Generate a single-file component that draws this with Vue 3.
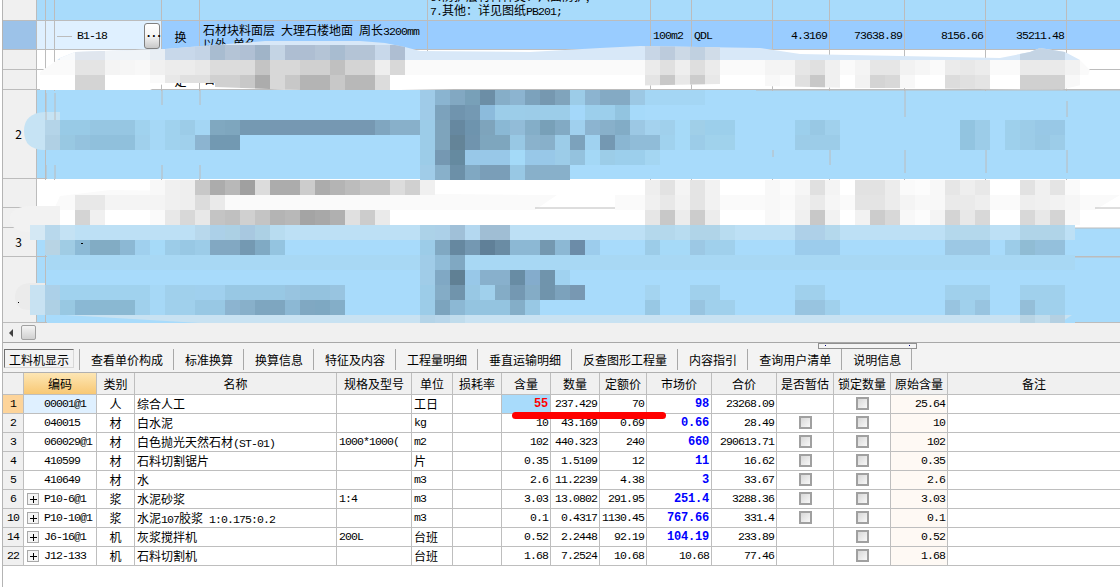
<script setup>
import { computed } from 'vue'

const parts = (text) =>
  text.match(/[\x00-\x7f]+|[^\x00-\x7f]+/g).map((t) => ({ t, lat: t.charCodeAt(0) < 128 }))

const tabs = ['查看单价构成', '标准换算', '换算信息', '特征及内容', '工程量明细', '垂直运输明细', '反查图形工程量', '内容指引', '查询用户清单', '说明信息']
const headers = ['', '编码', '类别', '名称', '规格及型号', '单位', '损耗率', '含量', '数量', '定额价', '市场价', '合价', '是否暂估', '锁定数量', '原始含量', '备注']

// no, code, tree, type, name, spec, unit, qty, amount, quota, market, total, est, lock, orig
const rows = [
  ['1', '00001@1', false, '人', '综合人工', '', '工日', '55', '237.429', '70', '98', '23268.09', false, true, '25.64'],
  ['2', '040015', false, '材', '白水泥', '', 'kg', '10', '43.169', '0.69', '0.66', '28.49', true, true, '10'],
  ['3', '060029@1', false, '材', '白色抛光天然石材(ST-01)', '1000*1000(', 'm2', '102', '440.323', '240', '660', '290613.71', true, true, '102'],
  ['4', '410599', false, '材', '石料切割锯片', '', '片', '0.35', '1.5109', '12', '11', '16.62', true, true, '0.35'],
  ['5', '410649', false, '材', '水', '', 'm3', '2.6', '11.2239', '4.38', '3', '33.67', true, true, '2.6'],
  ['6', 'P10-6@1', true, '浆', '水泥砂浆', '1:4', 'm3', '3.03', '13.0802', '291.95', '251.4', '3288.36', true, true, '3.03'],
  ['10', 'P10-10@1', true, '浆', '水泥107胶浆 1:0.175:0.2', '', 'm3', '0.1', '0.4317', '1130.45', '767.66', '331.4', true, true, '0.1'],
  ['14', 'J6-16@1', true, '机', '灰浆搅拌机', '200L', '台班', '0.52', '2.2448', '92.19', '104.19', '233.89', false, true, '0.52'],
  ['22', 'J12-133', true, '机', '石料切割机', '', '台班', '1.68', '7.2524', '10.68', '10.68', '77.46', false, true, '1.68']
].map((r) => ({
  no: r[0], code: r[1], tree: r[2], type: r[3], name: r[4], spec: r[5], unit: r[6], qty: r[7], amount: r[8],
  quota: r[9], market: r[10], total: r[11], est: r[12], lock: r[13], orig: r[14],
  edited: r[10] !== r[9]
}))

// upper grid, only the row heights and the one readable row matter
const upperRows = [
  { h: 21, cls: 'blue' }, { h: 29, cls: 'sel' }, { h: 20, cls: '' }, { h: 20, cls: '', kind: '定' },
  { h: 89, cls: 'blue', no: '2' }, { h: 29, cls: '' }, { h: 20, cls: '' }, { h: 29, cls: 'blue', no: '3' }, { h: 66, cls: 'blue' }
]

// pixelated mosaic, cells are 15x15 on a page aligned raster. two hex digits = a grey
const parse = (list) => {
  const out = []
  list.forEach(([y, x, s, h]) => {
    s.split(' ').forEach((tok, i) => {
      if (tok === '-') return
      const fill = tok.length === 2 ? `#${tok}${tok}${tok}` : `#${tok}`
      out.push({ x: x + i * 15, y, h: h || 15, fill })
    })
  })
  return out
}

const topCells = computed(() => parse([
  [45, 60, 'f8fafc e0e6ee e0e6ee f0f4f8 f0f4f8 f0f4f8 e8eef4 c8d8ea c8d8ea c4d4e6 a8bcd0 b4c4d6 b0c0d4 a0b4c8 c4d4e4 aebed2 aebed2 b4c4d6 a8bcd0 b4c4d6 b4c4d6 c8d8ea aebed2'],
  [45, 645, 'c8d6e6 bccbdc ccd9e6 c0d0e0 d0dce8'],
  [45, 1020, 'c4d4e4 c4d4e4 c4d4e4'],
  [60, 75, 'e4 e4 f4 f6 f8 f0 ec ec e8 dc dc dc c4 d8 d8 d0 d0 c0 d4 d4 ee d8'],
  [60, 645, 'eb e0 ee de eb'],
  [60, 765, 'f4 f4 e6 e0 f0'],
  [60, 855, 'f4 e6 e6 f2 f6'],
  [60, 945, 'eb e8 ec'],
  [60, 1020, 'ea ea ea f2'],
  [75, 75, 'd4 d4'],
  [75, 150, 'fa', 8],
  [75, 165, 'e8 e0 e0 d0 d0 c8 ac d8 c8 b4 b4 c8 b8 b8 dc'],
  [75, 645, 'e4 c8 e8 cc e8'],
  [75, 765, 'f8 fc e0 c8 f0'],
  [75, 855, 'f2 d4 d8 f8'],
  [75, 945, 'dc e0 e4'],
  [75, 1020, 'd0 d0 d0 f8']
]))

const cells = computed(() => parse([
  [90, 420, '9fcbe8 8ab4d0 82a8c2 78a0b8 6c8ea6 86aec8 8cb4d0 7ca2bc 7698b0 80a4bc 9ccce8 8cb4d0 84aac4 84aac4 9cc8e4 a4d6f4 a4d6f4 a4d6f4 a4d6f4'],
  [105, 420, '9fcbe8 7ca2bc 7094ae 7499b3 8cbbdc 9ccde9 9ccde9 9ccce8 9ccde9 9ccde9 a4d8fa 9ccfec 9ccfec 92c4e0 a6dafa'],
  [120, 45, 'b4d4e8 98cae6 98cae6 96c6e2 96c6e2 96c6e2 a0d2ee a6d8f6 a0d2ee 9ccce8 a4d6f4 80a8c0 7ea6be 7599b2 7599b2 7698b2 7698b2 7698b2 7698b2 7698b2 7698b2 7698b2 80a6c0 88b0ca 88b0ca 9ccce8 7ea4bc 6688a0 6e94ae 7ea4bc 8ab8d4 92bcd8 84aec8 78a0b8 82aac4 a0d0ee 8cb4d0 88b0ca 82acc6 9cc8e4 a4d2ee a0d0ec a6daf8 a0cfe8 9ccfeb 9ccfeb'],
  [120, 795, '9ccfec 98c8e4 a0d0ec'],
  [120, 960, '92c4e0 9ccce8 a8dbfb 9ed0ec 9ccce8 98c8e6 98c8e6'],
  [135, 45, 'b0d0e4 98c8e2 94c2de 90c0dc 90c0dc 90c0dc a0d0ec a6d8f6 a0d2ee a0d0ec 8cb4d0 7299b2 7299b2'],
  [135, 420, '9ccce8 7ea4bc 648498 7094ae 7ea6be 7ea6be 98c8e4 8ab2cc 88b0ca 9ccce8 7ca2bc a0d2f0 7498b2 8ab6d2 90bcd8 90bcd8 a0d2ee a6daf8 9ccce8 a0d2ec a0d2ec'],
  [135, 795, '9ccce8 9ccce8 9ccce8'],
  [135, 960, '92c4e0 9ccce8 a8dbfb 9ed0ec 9ccce8 98c8e4 9ccce8'],
  [150, 420, '9ccce8 7598b2 658aa0 98c8e8 98c8e8 98c8e8 a4daf8 98c8e8 98c8e8 9ccce8 94c2de a4d8f6 9ccde8 9ccfec 9ccfec a4d6f2'],
  [165, 420, 'a0cce8 88b0ca 6c90a8 80a8c2 7a9eb8 7a9eb8 98c8e4 88b0ca 88b0ca 88b0ca'],
  [180, 150, 'f8 f0 ee c8 ac b8 a0 dc ac ac cc ac b4 bc c4 c4 dc d0 f0'],
  [180, 645, 'ee e2 f4 e4 f2'],
  [180, 765, 'f8 fc f6 e0 f4'],
  [180, 855, 'e2 e2 ec fa fc f8 e6 ee e8'],
  [180, 1020, 'e2 f0 e4 fa'],
  [195, 75, 'e8 e8 f4 f4 f4 f4 f0 ee dc ea'],
  [195, 645, 'f0 e8 f2 e4 f2'],
  [195, 765, 'f8 fa f2 ea f6'],
  [195, 855, 'e4 e4 ec f4 f8 f8 ea ea ee'],
  [195, 1020, 'ee f0 f2 f6'],
  [210, 75, 'd4 f0'],
  [210, 150, 'fa e8 d8 e8 c4 c0 d0 c4 b4 b8 a4 a8 b0 e0 cc ea'],
  [210, 645, 'e6 c8 ec cc ec'],
  [210, 765, 'f8 fc f0 c8 f2'],
  [210, 855, 'f2 cc d8 f8 fc f4 d4 e8 d8'],
  [210, 1020, 'd8 e8 d4 f8'],
  [225, 30, 'd4e8f4 b8d8ec c4e2f4'],
  [225, 195, 'b8d8ec acd0e8 acd0e4 a8c8e0 acd0e4 b8dcf0'],
  [225, 420, 'acd2e8 acd0e8 a0c0d8 b4d8f0 a0bed4 a0bed4'],
  [225, 645, 'b4d8ec b4d8ec b8dcf0 b0d4e8 b0d4e8 b8dcf0'],
  [225, 795, 'aed0e8 aed0e8 b4d8ec'],
  [225, 945, 'b4d8ec b4d8ec b4d8ec'],
  [225, 1020, 'b0d4e8 b0d4e8 b0d4e8'],
  [240, 45, 'b8d4e4 a0cce4 8cbad6 82acc4 82acc4 8cb8d4 a0d0ee a6daf8 9ccce8 98c8e4 9ccce8 82a8c2 82a8c2 7499b2 80aac4 94c4e0'],
  [240, 420, '9ccce8 80a8c2 6688a0 7498b2 608098 6a8ca4 8cb8d4 8cb8d4 7498b0 8cb8d4 6c8ca8 9cccec'],
  [240, 645, '9ccce8 a6daf8 a6daf8 9cc8e4 a0d0ec a0d0ec'],
  [240, 795, '9cccec 9cccec 9cccec'],
  [240, 945, '9cc8e4 9cc8e4 9cc8e4 a8dbfb 9ccce8 90bcd4 94c0dc 94c0dc'],
  [255, 420, 'a0cce8 90bcd8 80a8c2'],
  [270, 420, 'a0cce8 80a8c4 608094 98c8e8 88b0cc 88b0cc 688ca4 84accc 7094ac a0d2f0'],
  [285, 30, 'c8e2f2 acd0e8 a0d2ee a0d2ee a0d2ee a0d2ee a0d2ee a0d2ee a6d8f6 a0d0ec a0d0ec a0d0ee a0d0ee 98c8e4 98c8e4 98c8e4 98c8e4 98c4e0 94c2de 94c2de 98c4e0'],
  [285, 420, '9ccce8 84acc6 7094ac 98c8e4 a0d0ec 84acc6 7498b2 84acc6 7094ac 7ca2bc 7898b2'],
  [285, 645, 'a4d4f0 a8dbfb a8dbfb a0d0ec a0d0ec'],
  [285, 795, 'a0d0ec a0d0ec'],
  [285, 945, 'a0d0ec a0d0ec a0d0ec'],
  [285, 1020, 'a0d0ec a0d0ec a0d0ec'],
  [300, 30, 'c8e2f2 aed0e4 98c8e2 8ab8d4 8ab8d2 8ab8d2 8ab8d2 a0d0ec a6d8f6 a0d0ec a0d0ec 98c8e4 98c8e4 8cb4d0 88b0ca 7ea6c0 7ea6c0 8cb8d4 80a8c2 7ea8c2 84aec8'],
  [300, 420, '9ccce8 7ca4be 8cb8d4 94c4e0 94c4e0 94c4e0 84aec8 98c8e4'],
  [300, 645, '98c8e4 a8dbfb a8dbfb 98c4e0 a0d0ec a0d0ec'],
  [300, 795, '98c4e0 98c4e0 a0d0ec'],
  [300, 945, '98c4e0 a0d0ec 98c4e0'],
  [300, 1020, '94bed8 a0d0ec a0d0ec'],
  [315, 420, 'b4d4e8 b8d6ea c0dcec'],
  [315, 1020, 'b8d4e4 c0dcec b4d0e2']
]))

// grid line pieces that stay visible between the brush strokes
const lines = [
  [46, 93, 46, 120], [55, 93, 55, 120], [46, 165, 46, 179], [55, 165, 55, 179],
  [162, 90, 162, 105], [200, 90, 200, 105], [162, 165, 162, 179], [200, 165, 200, 179],
  [773, 150, 773, 157], [830, 150, 830, 165], [905, 90, 905, 117], [905, 150, 905, 173],
  [986, 150, 986, 173], [1067, 101, 1067, 117], [1067, 150, 1067, 173],
  [756, 90, 1120, 90],
  [535, 208, 615, 208], [1095, 208, 1120, 208], [1075, 228, 1120, 228], [1075, 257, 1120, 257]
]
</script>

<template>
  <div class="page">
    <div class="upper">
      <div v-for="(r, i) in upperRows" :key="i" class="u-row" :class="r.cls" :style="{ height: r.h + 'px' }">
        <div class="u-no">{{ r.no }}</div>
        <div class="u-tree"></div>
        <div class="u-tree"></div>
        <div class="u-code">
          <template v-if="r.cls === 'sel'">
            <span class="branch"></span>
            <span class="lat">B1-18</span>
            <button class="dots">...</button>
          </template>
        </div>
        <div class="u-kind">{{ r.cls === 'sel' ? '换' : r.kind }}</div>
        <div class="u-name">
          <template v-if="r.cls === 'sel'">
            <span v-for="p in parts('石材块料面层 大理石楼地面 周长3200mm 以外 单色')" :key="p.t" :class="{ lat: p.lat }">{{ p.t }}</span>
          </template>
          <template v-if="r.kind">石材块料面层</template>
        </div>
        <div class="u-desc">
          <template v-if="i === 0">
            <div><span class="lat">6.</span>防护层材料种类：六面防护;</div>
            <div><span class="lat">7.</span>其他：详见图纸<span class="lat">PB201;</span></div>
          </template>
        </div>
        <div class="u-unit"><span v-if="r.cls === 'sel'" class="lat">100m2</span></div>
        <div class="u-src"><span v-if="r.cls === 'sel'" class="lat">QDL</span></div>
        <div class="u-n"><span v-if="r.cls === 'sel'" class="lat">4.3169</span></div>
        <div class="u-n"><span v-if="r.cls === 'sel'" class="lat">73638.89</span></div>
        <div class="u-n"><span v-if="r.cls === 'sel'" class="lat">8156.66</span></div>
        <div class="u-n"><span v-if="r.cls === 'sel'" class="lat">35211.48</span></div>
        <div class="u-last"></div>
      </div>

      <svg class="mosaic" width="1118" height="323" viewBox="2 0 1118 323">
        <defs>
          <clipPath id="brush1">
            <path d="M40 72L60 58L75 52L165 49L215 45L265 41L360 41L385 43L405 47L420 51L530 52L600 48L640 46L760 48L800 54L1000 58L1030 52L1040 48L1065 52L1080 60L1090 70L1085 84L1060 90L900 88L855 88L765 86L720 84L400 90L300 90L215 87L215 83L165 83L150 90L40 90Z" />
          </clipPath>
        </defs>
        <!-- stroke over the white rows under the selection -->
        <g clip-path="url(#brush1)">
          <rect x="0" y="40" width="1120" height="20" fill="#d8e8f8" />
          <rect x="0" y="60" width="1120" height="15" fill="#fafafa" />
          <rect x="0" y="75" width="1120" height="15" fill="#fff" />
          <rect v-for="c in topCells" :key="c.x + '-' + c.y" :x="c.x" :y="c.y" width="15" :height="c.h" :fill="c.fill" />
        </g>
        <!-- base strokes -->
        <rect x="47" y="91" width="1073" height="88" fill="#a8dbfb" />
        <path d="M24 131Q24 113 45 112L60 112L60 150L45 150Q24 150 24 131Z" fill="#c6e3f4" />
        <rect x="37" y="180" width="1083" height="48" fill="#fff" />
        <path d="M55 207L60 196L110 190L535 195L557 195L535 210L60 210Z" fill="#fafafa" />
        <path d="M615 195L1120 195L1095 210L615 210Z" fill="#fafafa" />
        <path d="M10 218Q10 207 30 206L60 206L60 232L30 232Q10 232 10 218Z" fill="#f2f2f2" />
        <rect x="47" y="229" width="1028" height="94" fill="#a8dbfb" />
        <rect x="45" y="225" width="1030" height="15" fill="#bde0f5" />
        <rect x="47" y="255" width="1028" height="15" fill="#a8d8f4" />
        <path d="M15 297Q15 284 30 283L45 283L45 310L30 310Q15 310 15 297Z" fill="#ebebeb" />
        <path d="M65 315L1072 315L1060 323L200 323Z" fill="#c8e2f2" />
        <rect v-for="c in cells" :key="c.x + '_' + c.y" :x="c.x" :y="c.y" width="15" :height="c.h" :fill="c.fill" />
        <line v-for="(l, i) in lines" :key="i" :x1="l[0]" :y1="l[1]" :x2="l[2]" :y2="l[3]" stroke="#bcbcbc" />
        <rect x="18" y="302" width="1" height="1" fill="#000" />
        <rect x="81" y="243" width="2" height="1" fill="#000" />
      </svg>
    </div>

    <div class="hscroll">
      <span class="arrow"></span>
      <span class="thumb"></span>
    </div>

    <div class="tabs">
      <div class="tab first"><span class="pressed">工料机显示</span></div>
      <div v-for="t in tabs" :key="t" class="tab">{{ t }}</div>
      <div class="splitter"><i></i><i></i></div>
    </div>

    <div class="table">
      <div class="t-row head">
        <div v-for="(h, i) in headers" :key="i" class="c" :class="{ active: i === 1 }">{{ h }}</div>
      </div>
      <div v-for="(r, i) in rows" :key="r.no" class="t-row">
        <div class="c rn lat" :class="{ active: i === 0 }">{{ r.no }}</div>
        <div class="c code" :class="{ cur: i === 0 }">
          <span v-if="r.tree" class="plus"></span>
          <span class="lat">{{ r.code }}</span>
        </div>
        <div class="c">{{ r.type }}</div>
        <div class="c left">
          <span class="name"><span v-for="p in parts(r.name)" :key="p.t" :class="{ lat: p.lat }">{{ p.t }}</span></span>
        </div>
        <div class="c left lat">{{ r.spec }}</div>
        <div class="c left" :class="{ lat: /^[a-z]/.test(r.unit) }">{{ r.unit }}</div>
        <div class="c"></div>
        <div class="c right lat" :class="{ red: i === 0 }">{{ r.qty }}</div>
        <div class="c right lat">{{ r.amount }}</div>
        <div class="c right lat">{{ r.quota }}</div>
        <div class="c right lat" :class="{ bold: r.edited }">{{ r.market }}</div>
        <div class="c right lat">{{ r.total }}</div>
        <div class="c"><span v-if="r.est" class="check"></span></div>
        <div class="c"><span v-if="r.lock" class="check"></span></div>
        <div class="c right lat orig">{{ r.orig }}</div>
        <div class="c"></div>
      </div>
      <div class="redline"></div>
    </div>
  </div>
</template>

<style scoped>
.page {
  width: 1118px;
  height: 587px;
  margin-left: 2px;
  border-left: 1px solid #b4b4b4;
  display: flex;
  flex-direction: column;
  overflow: hidden;
  font-family: "Liberation Mono", "Noto Sans CJK SC", monospace;
  font-size: 12px;
  color: #000;
  background: #fff;
}
.lat {
  font-family: "Liberation Mono", monospace;
  font-size: 11.5px;
  letter-spacing: -0.9px;
}
.upper {
  position: relative;
  height: 323px;
  flex: none;
  overflow: hidden;
  font-family: "Noto Sans CJK SC", sans-serif;
  line-height: 12px;
}
.mosaic {
  position: absolute;
  left: -1px;
  top: 0;
}
.u-row {
  display: grid;
  grid-template-columns: 34px 9px 9px 107px 38px 228px 223px 41px 81px 57px 75px 81px 81px 53px;
  border-bottom: 1px solid #bcbcbc;
  box-sizing: border-box;
  background: #fff;
  overflow: hidden;
}
.u-row > div {
  border-right: 1px solid #bcbcbc;
  box-sizing: border-box;
  min-width: 0;
  overflow: hidden;
}
.u-row.blue { background: #a8dbfb; }
.u-row.sel { background: #99ccff; }
.u-no {
  background: #f0f0f0;
  display: flex;
  align-items: center;
  justify-content: center;
  padding-right: 2px;
}
.sel .u-no { background: #9cc2e8; }
.sel .u-tree, .sel .u-code { background: #dff0ff; }
.u-code {
  display: flex;
  align-items: center;
  gap: 5px;
  position: relative;
  padding-top: 2px;
}
.branch {
  width: 15px;
  height: 1px;
  margin-left: 2px;
  background: #bcbcbc;
}
.dots {
  position: absolute;
  right: 1px;
  top: 2px;
  width: 16px;
  height: 26px;
  padding: 0 0 4px;
  border: 1px solid #808080;
  border-radius: 3px;
  background: linear-gradient(#fff, #f4f4f4 50%, #c8c8c8);
  font: bold 12px/1 "Liberation Mono", monospace;
  letter-spacing: -2px;
}
.u-kind {
  display: flex;
  align-items: center;
  justify-content: center;
  padding-top: 3px;
}
.u-name {
  padding: 3px 0 0 3px;
  white-space: pre-wrap;
}
.u-desc {
  display: flex;
  flex-direction: column;
  justify-content: flex-end;
  padding: 0 0 2px 2px;
  white-space: nowrap;
}
.u-unit, .u-src {
  display: flex;
  align-items: center;
  padding: 2px 0 0 2px;
}
.u-n {
  display: flex;
  align-items: center;
  justify-content: flex-end;
  padding: 2px 2px 0 0;
}
.u-last { border-right: none !important; }
.hscroll {
  height: 19px;
  flex: none;
  background: #f0f0f0;
  border-bottom: 1px solid #a8a8a8;
  display: flex;
  align-items: center;
  padding-left: 6px;
  gap: 8px;
}
.arrow {
  width: 0;
  height: 0;
  border: 4px solid transparent;
  border-right-color: #404040;
  border-left-width: 0;
}
.thumb {
  width: 15px;
  height: 15px;
  box-sizing: border-box;
  border: 1px solid #a0a0a0;
  border-radius: 2px;
  background: linear-gradient(#f4f4f4, #d0d0d0);
}
.tabs {
  position: relative;
  height: 29px;
  flex: none;
  display: flex;
  align-items: center;
  background: #f3f3f3;
  border-bottom: 1px solid #b0b0b0;
  font-family: "Noto Sans CJK SC", sans-serif;
}
.tab {
  height: 21px;
  line-height: 21px;
  padding: 0 10px 0 11px;
  margin-top: 3px;
  border-right: 1px solid #a8a8a8;
  white-space: nowrap;
}
.tab.first {
  padding: 0;
  width: 77px;
  box-sizing: border-box;
  flex: none;
}
.pressed {
  display: block;
  width: 70px;
  margin-left: 1px;
  height: 19px;
  line-height: 20px;
  text-align: center;
  box-sizing: border-box;
  border: 1px solid;
  border-color: #707070 #d8d8d8 #d8d8d8 #707070;
}
.splitter {
  position: absolute;
  left: 815px;
  top: 0;
  width: 99px;
  height: 6px;
  box-sizing: border-box;
  border: 1px solid #909090;
  background: #f4f4f4;
  display: flex;
  justify-content: space-between;
  padding: 1px 6px;
}
.splitter i {
  width: 1px;
  height: 1px;
  background: #000080;
}
.table {
  position: relative;
  flex: 1;
  font-family: "Noto Sans CJK SC", sans-serif;
}
.t-row {
  display: grid;
  grid-template-columns: 21px 73px 38px 202px 75px 41px 49px 49px 49px 47px 65px 65px 57px 57px 57px 1fr;
  height: 19px;
}
.t-row.head {
  height: 22px;
}
.c {
  border-right: 1px solid #bebebe;
  border-bottom: 1px solid #bebebe;
  box-sizing: border-box;
  display: flex;
  align-items: center;
  justify-content: center;
  white-space: nowrap;
  overflow: hidden;
  min-width: 0;
  padding-bottom: 1px;
}
.name { white-space: pre; }
.head .c {
  background: #f0f0f0;
}
.head .c.active {
  background: linear-gradient(#fde6b4, #f8c874);
}
.rn {
  background: #f0f0f0;
}
.rn.active {
  background: #fdd49a;
}
.code {
  justify-content: flex-start;
  padding-left: 20px;
  position: relative;
}
.cur {
  background: #dff0ff;
}
.plus {
  position: absolute;
  left: 3px;
  top: 3px;
  width: 12px;
  height: 12px;
  box-sizing: border-box;
  border: 1px solid #a8a8a8;
  background:
    linear-gradient(#000, #000) center / 7px 1px no-repeat,
    linear-gradient(#000, #000) center / 1px 7px no-repeat,
    #f4f4f4;
}
.left {
  justify-content: flex-start;
  padding-left: 2px;
}
.right {
  justify-content: flex-end;
  padding-right: 2px;
}
.red {
  background: #a8dbfb;
  color: #ff0000;
  font-weight: bold;
  font-size: 12px;
  letter-spacing: -0.2px;
}
.bold {
  color: #0000ff;
  font-weight: bold;
  font-size: 12px;
  letter-spacing: -0.2px;
}
.orig {
  background: #fef9f4;
}
.check {
  width: 13px;
  height: 13px;
  box-sizing: border-box;
  border: 2px solid #a0a0a0;
  background: linear-gradient(135deg, #d8d8d8, #f8f8f8);
}
.redline {
  position: absolute;
  left: 509px;
  top: 39px;
  width: 154px;
  height: 7px;
  border-radius: 4px;
  background: #ff0000;
}
</style>

<style>
html, body {
  margin: 0;
  background: #fff;
}
</style>
